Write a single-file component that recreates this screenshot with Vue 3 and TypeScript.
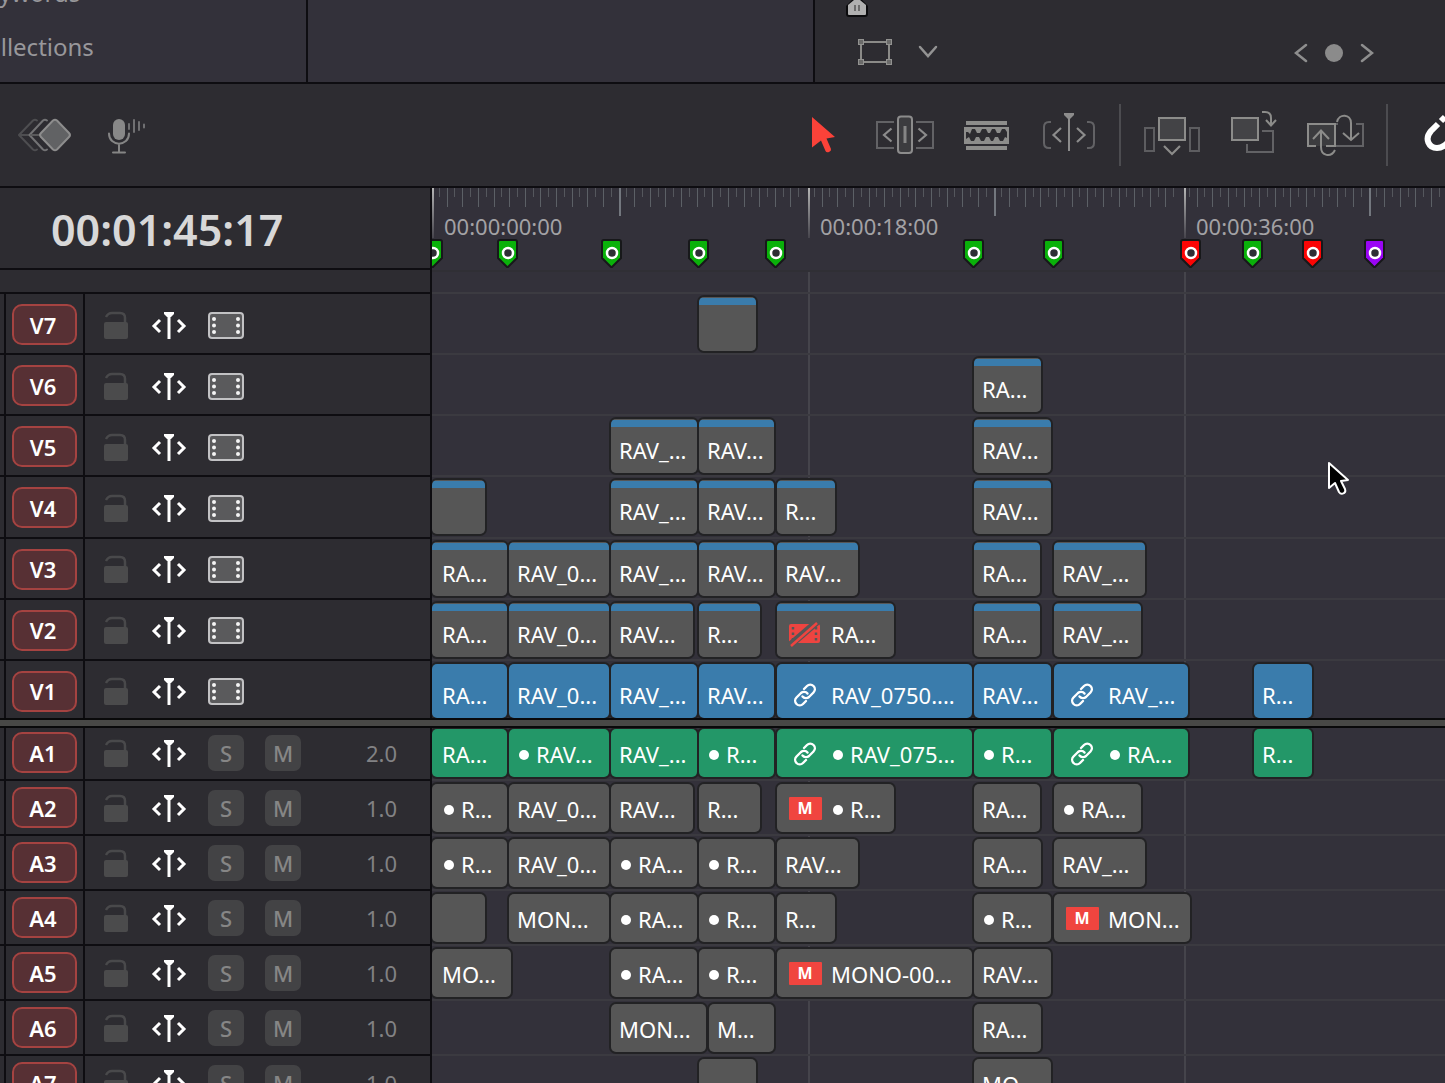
<script setup lang="ts">
type Flag = 'link' | 'muted' | 'disabled'

interface Clip {
  start: number
  end: number
  label: string
  flag?: Flag
  dot?: boolean
}

interface Track {
  name: string
  channels?: string
  main?: boolean
  clips: Clip[]
}

/* "*" before a label marks a clip that carries its own channel dot */
function clip(start: number, end: number, text = '', flag?: Flag): Clip {
  const dot = text.startsWith('*')
  return { start, end, label: dot ? text.slice(1) : text, dot, flag }
}

function gapBefore(track: Track, index: number): number {
  const previous = index === 0 ? 0 : track.clips[index - 1].end
  return track.clips[index].start - previous
}

const videoTracks: Track[] = [
  { name: 'V7', clips: [clip(267, 324)] },
  { name: 'V6', clips: [clip(542, 609, 'RA...')] },
  { name: 'V5', clips: [clip(179, 265, 'RAV_...'), clip(267, 342, 'RAV...'), clip(542, 619, 'RAV...')] },
  {
    name: 'V4',
    clips: [
      clip(0, 53),
      clip(179, 265, 'RAV_...'),
      clip(267, 342, 'RAV...'),
      clip(345, 403, 'R...'),
      clip(542, 619, 'RAV...'),
    ],
  },
  {
    name: 'V3',
    clips: [
      clip(0, 75, 'RA...'),
      clip(77, 177, 'RAV_0...'),
      clip(179, 265, 'RAV_...'),
      clip(267, 342, 'RAV...'),
      clip(345, 426, 'RAV...'),
      clip(542, 608, 'RA...'),
      clip(622, 713, 'RAV_...'),
    ],
  },
  {
    name: 'V2',
    clips: [
      clip(0, 75, 'RA...'),
      clip(77, 177, 'RAV_0...'),
      clip(179, 261, 'RAV...'),
      clip(267, 328, 'R...'),
      clip(345, 462, 'RA...', 'disabled'),
      clip(542, 608, 'RA...'),
      clip(622, 709, 'RAV_...'),
    ],
  },
  {
    name: 'V1',
    main: true,
    clips: [
      clip(0, 75, 'RA...'),
      clip(77, 177, 'RAV_0...'),
      clip(179, 265, 'RAV_...'),
      clip(267, 342, 'RAV...'),
      clip(345, 540, 'RAV_0750....', 'link'),
      clip(542, 619, 'RAV...'),
      clip(622, 756, 'RAV_...', 'link'),
      clip(822, 880, 'R...'),
    ],
  },
]

const audioTracks: Track[] = [
  {
    name: 'A1',
    channels: '2.0',
    main: true,
    clips: [
      clip(0, 75, 'RA...'),
      clip(77, 177, '*RAV...'),
      clip(179, 265, 'RAV_...'),
      clip(267, 342, '*R...'),
      clip(345, 540, '*RAV_075...', 'link'),
      clip(542, 619, '*R...'),
      clip(622, 756, '*RA...', 'link'),
      clip(822, 880, 'R...'),
    ],
  },
  {
    name: 'A2',
    channels: '1.0',
    clips: [
      clip(0, 75, '*R...'),
      clip(77, 177, 'RAV_0...'),
      clip(179, 261, 'RAV...'),
      clip(267, 328, 'R...'),
      clip(345, 462, '*R...', 'muted'),
      clip(542, 608, 'RA...'),
      clip(622, 709, '*RA...'),
    ],
  },
  {
    name: 'A3',
    channels: '1.0',
    clips: [
      clip(0, 75, '*R...'),
      clip(77, 177, 'RAV_0...'),
      clip(179, 265, '*RA...'),
      clip(267, 342, '*R...'),
      clip(345, 426, 'RAV...'),
      clip(542, 609, 'RA...'),
      clip(622, 713, 'RAV_...'),
    ],
  },
  {
    name: 'A4',
    channels: '1.0',
    clips: [
      clip(0, 53),
      clip(77, 177, 'MON...'),
      clip(179, 265, '*RA...'),
      clip(267, 342, '*R...'),
      clip(345, 403, 'R...'),
      clip(542, 619, '*R...'),
      clip(622, 758, 'MON...', 'muted'),
    ],
  },
  {
    name: 'A5',
    channels: '1.0',
    clips: [
      clip(0, 79, 'MO...'),
      clip(179, 265, '*RA...'),
      clip(267, 342, '*R...'),
      clip(345, 540, 'MONO-00...', 'muted'),
      clip(542, 619, 'RAV...'),
    ],
  },
  {
    name: 'A6',
    channels: '1.0',
    clips: [clip(179, 274, 'MON...'), clip(277, 342, 'M...'), clip(542, 609, 'RA...')],
  },
  { name: 'A7', channels: '1.0', clips: [clip(267, 324), clip(542, 619, 'MO...')] },
]

const groups = [
  { kind: 'video', tracks: videoTracks },
  { kind: 'audio', tracks: audioTracks },
]

const labels = ['00:00:00:00', '00:00:18:00', '00:00:36:00']

const ticks = Array.from({ length: 300 }, (_, i) => {
  if (i % 48 === 0) return { x: (i / 48) * 376, kind: 'major' }
  const kind = i % 24 === 0 ? 'half' : i % 2 === 0 ? 'medium' : 'small'
  return { x: Math.round((i * 375) / 48) - 1, kind }
})
const tickHeight: Record<string, number> = { major: 50, half: 28, medium: 19, small: 9 }

const green = '#0ab10a'
const red = '#fb0505'
const markers = [
  { x: 0, color: green },
  { x: 75, color: green },
  { x: 179, color: green },
  { x: 266, color: green },
  { x: 343, color: green },
  { x: 541, color: green },
  { x: 621, color: green },
  { x: 758, color: red },
  { x: 820, color: green },
  { x: 880, color: red },
  { x: 942, color: '#9a05f5' },
]
</script>

<template>
  <div class="editor">
    <header class="panels">
      <ul class="bins">
        <li>Keywords</li>
        <li>Collections</li>
      </ul>
      <div class="media"></div>
      <div class="viewer">
        <div class="viewer-scrub">
          <svg width="22" height="18" viewBox="0 0 22 18">
            <path d="M0 6L7 -1H15L22 6V14a3 3 0 0 1-3 3H3a3 3 0 0 1-3-3Z" fill="#0b0b0d" />
            <path d="M2 5L8 0H14L20 5V14a1 1 0 0 1-1 1H3a1 1 0 0 1-1-1Z" fill="#b0b0b0" />
            <path d="M9 5V11M13 5V11" stroke="#6c6c6c" stroke-width="2" />
          </svg>
        </div>
        <div class="viewer-controls">
          <button type="button" aria-label="Transform">
            <svg width="36" height="28" viewBox="0 0 36 28" fill="none">
              <rect x="4" y="4" width="28" height="20" stroke="#8b8b88" stroke-width="2" />
              <g fill="#6b6b6a" stroke="#929290" stroke-width="1">
                <rect x="1.500" y="1.500" width="5" height="5" />
                <rect x="29.500" y="1.500" width="5" height="5" />
                <rect x="1.500" y="21.500" width="5" height="5" />
                <rect x="29.500" y="21.500" width="5" height="5" />
              </g>
            </svg>
          </button>
          <button type="button" class="drop" aria-label="Transform options">
            <svg width="20" height="14" viewBox="0 0 20 14" fill="none">
              <path d="M2 2L10 11L18 2" stroke="#939393" stroke-width="2.500" stroke-linecap="round" />
            </svg>
          </button>
          <div class="keyframes">
            <button type="button" aria-label="Previous keyframe">
              <svg width="14" height="20" viewBox="0 0 14 20" fill="none">
                <path d="M12 2L2 10L12 18" stroke="#8e8e8e" stroke-width="2.500" stroke-linecap="round" />
              </svg>
            </button>
            <button type="button" aria-label="Add keyframe">
              <svg width="18" height="18" viewBox="0 0 18 18"><circle cx="9" cy="9" r="9" fill="#8b8b8b" /></svg>
            </button>
            <button type="button" aria-label="Next keyframe">
              <svg width="14" height="20" viewBox="0 0 14 20" fill="none">
                <path d="M2 2L12 10L2 18" stroke="#8e8e8e" stroke-width="2.500" stroke-linecap="round" />
              </svg>
            </button>
          </div>
        </div>
      </div>
    </header>

    <nav class="toolbar">
      <div class="tools">
        <button type="button" class="tool" aria-label="Keyframes">
          <svg viewBox="-32 -32 64 64" fill="none" stroke-width="2" stroke-linejoin="round" stroke-linecap="round">
            <path d="M-8 -14.500Q-10 -16 -12 -14.500L-26 0L-12 14.500Q-10 16 -8 14.500" stroke="#4e4e51" />
            <path d="M-25 0H-16" stroke="#4e4e51" />
            <path d="M2 -14.500Q0 -16 -2 -14.500L-15.500 0L-2 14.500Q0 16 2 14.500" stroke="#737375" />
            <path d="M-14 0H-6" stroke="#59595b" />
            <path
              d="M8 -14.500Q10 -16 12 -14.500L24 -2Q26 0 24 2L12 14.500Q10 16 8 14.500L-4 2Q-6 0 -4 -2Z"
              fill="#616264"
              stroke="#8d8d8d"
            />
          </svg>
        </button>
        <button type="button" class="tool" aria-label="Voiceover">
          <svg viewBox="-32 -32 64 64" fill="none" stroke="#858585" stroke-width="2" stroke-linecap="round">
            <rect x="-14" y="-16" width="12" height="21" rx="6" fill="#888888" stroke="none" />
            <path d="M-18 -1.500C-18 12 2 12 2 -1.500M-8 9V17M-14 17.500H-2" />
            <path d="M2 -11V-6M7 -15V-3M12 -13V-5M17 -10.500V-7.500" stroke="#707072" />
          </svg>
        </button>
      </div>

      <div class="tools">
        <button type="button" class="tool" aria-label="Selection">
          <svg viewBox="-32 -32 64 64">
            <path
              d="M-11 -18L12 2L3.500 3.500L8 14Q8.500 16 6 17Q3.500 18 2.500 16L-2 5.500L-11 12.500Z"
              fill="#fb4239"
            />
          </svg>
        </button>
        <button type="button" class="tool" aria-label="Trim edit">
          <svg viewBox="-32 -32 64 64" fill="none" stroke="#8c8c8c" stroke-width="2">
            <path d="M-11 -13H-28V13H-11M11 -13H28V13H11" stroke="#626265" />
            <path d="M-13.500 -6.500L-21 0L-13.500 6.500M13.500 -6.500L21 0L13.500 6.500" stroke-width="2.200" />
            <rect x="-7" y="-18.500" width="14" height="36.500" rx="3" fill="#3c3c3f" />
            <path d="M0 -9V8" stroke-width="3" stroke="#858585" />
          </svg>
        </button>
        <button type="button" class="tool" aria-label="Blade edit">
          <svg viewBox="-32 -32 64 64" fill="#8d8d8b">
            <rect x="-21" y="-14" width="41" height="4" />
            <rect x="-23" y="-8" width="45" height="17" />
            <path
              d="M-21 -3H-19L-17 -1L-15 -6H-12L-10 -2H-7L-5 -6H-1L1 -2H3L5 -6H8L10 -2H13L15 -6H18L20 -3V3L18 2L16 6H13L11 2H8L6 6H4L2 2H-1L-3 6H-6L-8 2H-11L-13 6H-16L-18 2L-21 4Z"
              fill="#2d2c30"
            />
            <rect x="-21" y="11" width="41" height="4" />
          </svg>
        </button>
        <button type="button" class="tool" aria-label="Dynamic trim">
          <svg viewBox="-32 -32 64 64" fill="none" stroke="#8c8c8c" stroke-width="2">
            <path d="M-18 -13H-20Q-25 -13 -25 -8V8Q-25 13 -20 13H-18M18 -13H20Q25 -13 25 -8V8Q25 13 20 13H18" stroke="#626265" />
            <path d="M-8 -7L-15.500 0L-8 7M8 -7L15.500 0L8 7" stroke-width="2.200" />
            <path d="M0 -18V16" />
            <path d="M-5 -22H5V-20L1 -16H-1L-5 -20Z" fill="#8c8c8c" stroke="none" />
          </svg>
        </button>
        <span class="separator"></span>
        <button type="button" class="tool" aria-label="Insert">
          <svg viewBox="-32 -32 64 64" fill="none" stroke="#8c8c8a" stroke-width="2">
            <rect x="-27" y="-7" width="9" height="23" stroke="#5d5d60" />
            <rect x="18" y="-7" width="9" height="23" stroke="#5d5d60" />
            <rect x="-13" y="-17" width="26" height="22" fill="#434346" />
            <path d="M-8 11L0 19L8 11" stroke-width="2.200" />
          </svg>
        </button>
        <button type="button" class="tool" aria-label="Overwrite">
          <svg viewBox="-32 -32 64 64" fill="none" stroke="#8c8c8a" stroke-width="2">
            <path d="M8 -4H19V17H-7V9" stroke="#626265" />
            <rect x="-22" y="-17" width="26" height="22" fill="#434346" />
            <path d="M8 -23H11Q17 -23 17 -17V-10M12 -15L17 -9.500L22 -15" />
          </svg>
        </button>
        <button type="button" class="tool" aria-label="Replace">
          <svg viewBox="-32 -32 64 64" fill="none" stroke="#8c8c8a" stroke-width="2">
            <path d="M-27 -11H-2V11H-27Z" fill="#3c3c3f" stroke="none" />
            <path d="M2 -11H-1V11H27V-11H20" stroke="#626265" />
            <path d="M-20 11H-28V-11H-1V11H-10" />
            <path d="M-1 15C-5 23 -15 21 -15 12V-4M-23 4L-15 -4.500L-7 4" />
            <path d="M1 -13C3 -22 15 -21 15 -12V4M7 -2L15 5L23 -2" />
          </svg>
        </button>
        <span class="separator"></span>
        <button type="button" class="tool" aria-label="Snapping">
          <svg viewBox="-32 -32 64 64" fill="none" stroke="#ffffff" stroke-width="6">
            <path d="M-1 -11L-8 -4C-15 4 -10 13 -2 13C5 13 9 7 15 1" />
            <path d="M2 -14L6 -18M18 -2L22 -6" />
          </svg>
        </button>
      </div>
    </nav>

    <main class="timeline">
      <section class="headers">
        <div class="timecode">00:01:45:17</div>
        <div class="strip"></div>
        <template v-for="group in groups" :key="group.kind">
          <div v-if="group.kind === 'audio'" class="divider"></div>
          <div class="group" :class="group.kind">
            <div v-for="track in group.tracks" :key="track.name" class="head">
              <span class="edge"></span>
              <div class="dest">
                <button type="button" class="badge">{{ track.name }}</button>
              </div>
              <div class="controls">
                <button type="button" :aria-label="'Lock ' + track.name">
                  <svg width="28" height="30" viewBox="0 0 28 30">
                    <path d="M4 7Q6 3 10 3H18Q23 3 23 8V13" fill="none" stroke="#49494b" stroke-width="2.500" />
                    <rect x="2" y="12" width="24" height="17" rx="2" fill="#4b4b4c" />
                  </svg>
                </button>
                <button type="button" :aria-label="'Auto select ' + track.name">
                  <svg width="36" height="30" viewBox="0 0 36 30" fill="none" stroke="#ffffff" stroke-width="3">
                    <path d="M9 10L3 16L9 22M27 10L33 16L27 22" />
                    <path d="M18 4V29" />
                    <path d="M13 2H23V4L20 7H16L13 4Z" fill="#ffffff" stroke="none" />
                  </svg>
                </button>
                <button v-if="group.kind === 'video'" type="button" :aria-label="'Enable ' + track.name">
                  <svg width="36" height="30" viewBox="0 0 36 30">
                    <rect x="1" y="3" width="34" height="25" rx="3" fill="#5a5a5c" stroke="#c2c2c4" stroke-width="2" />
                    <g fill="#f4f4f4">
                      <circle v-for="y in [9, 15.5, 22]" :key="'l' + y" cx="6" :cy="y" r="2" />
                      <circle v-for="y in [9, 15.5, 22]" :key="'r' + y" cx="30" :cy="y" r="2" />
                    </g>
                  </svg>
                </button>
                <template v-else>
                  <button type="button" class="toggle">S</button>
                  <button type="button" class="toggle">M</button>
                  <span class="channels">{{ track.channels }}</span>
                </template>
              </div>
            </div>
          </div>
        </template>
      </section>

      <section class="body">
        <div class="ruler">
          <svg class="scale" width="100%" height="82">
            <defs>
              <linearGradient id="fade" x1="0" y1="0" x2="0" y2="1">
                <stop offset="0" stop-color="#b4b4b4" />
                <stop offset="1" stop-color="#b4b4b4" stop-opacity="0.150" />
              </linearGradient>
            </defs>
            <rect
              v-for="tick in ticks"
              :key="tick.x"
              class="tick"
              :class="tick.kind"
              :x="tick.x"
              y="0"
              :width="tick.kind === 'small' || tick.kind === 'medium' ? 1 : 2"
              :height="tickHeight[tick.kind]"
            />
            <g v-for="marker in markers" :key="marker.x" :transform="`translate(${marker.x} 52)`">
              <path
                d="M-7 0H8Q10 0 10 2V18L1 27H0L-9 18V2Q-9 0 -7 0Z"
                :fill="marker.color"
                stroke="#17181a"
                stroke-width="2"
              />
              <circle cx="1" cy="13" r="5" fill="#2e2e34" stroke="#ffffff" stroke-width="2.500" />
            </g>
          </svg>
          <span v-for="label in labels" :key="label" class="stamp">{{ label }}</span>
        </div>

        <div class="lanes">
          <div class="strip"></div>
          <template v-for="group in groups" :key="group.kind">
            <div v-if="group.kind === 'audio'" class="divider"></div>
            <div class="group" :class="group.kind">
              <div v-for="track in group.tracks" :key="track.name" class="lane">
                <div
                  v-for="(item, index) in track.clips"
                  :key="item.start"
                  class="clip"
                  :class="{ main: track.main, first: item.start === 0 }"
                  :style="{ marginLeft: gapBefore(track, index) + 'px', width: item.end - item.start + 'px' }"
                >
                  <span v-if="item.flag" class="flag">
                    <svg v-if="item.flag === 'link'" width="24" height="24" viewBox="0 0 24 24" fill="none" stroke="#ffffff" stroke-width="2.400" stroke-linecap="round">
                      <path d="M9.500 13.500a4.500 4.500 0 0 0 6.500 0.500l4.500-4.500a4.500 4.500 0 0 0-6.500-6.500l-3 3" />
                      <path d="M14.500 10.500a4.500 4.500 0 0 0-6.500-0.500l-4.500 4.500a4.500 4.500 0 0 0 6.500 6.500l3-3" />
                    </svg>
                    <svg v-else-if="item.flag === 'disabled'" width="34" height="26" viewBox="0 0 34 26">
                      <rect x="1" y="3" width="31" height="19" rx="2" fill="#ee4440" />
                      <path d="M5 6V20M28 6V20" stroke="#565656" stroke-width="2.500" stroke-dasharray="2.500 3" />
                      <path d="M1 25L30 0" stroke="#565656" stroke-width="7" />
                      <path d="M3 25L29 2" stroke="#ee4440" stroke-width="2.500" />
                    </svg>
                    <b v-else class="mute">M</b>
                  </span>
                  <i v-if="item.dot" class="dot"></i>
                  <span>{{ item.label }}</span>
                </div>
              </div>
            </div>
          </template>
        </div>
      </section>
    </main>

    <svg class="pointer" width="24" height="38" viewBox="0 0 24 38">
      <path
        d="M3 3V28L9 23L13 32Q15 35 18 33Q20 32 19 29L15 21L22 20Z"
        fill="#000000"
        stroke="#ffffff"
        stroke-width="2"
        stroke-linejoin="round"
      />
    </svg>
  </div>
</template>

<style>
body {
  margin: 0;
  background: #2d2c31;
}
</style>

<style scoped>
.editor {
  --line: #0e0d11;
  --chrome: #2d2c31;
  --canvas: #33313a;
  position: relative;
  height: 100vh;
  overflow: hidden;
  background: var(--chrome);
  color: #ffffff;
  font-family: 'Noto Sans', 'Open Sans', sans-serif;
  font-size: 22px;
  line-height: 30px;
}

.editor *,
.editor *::before {
  box-sizing: border-box;
}

button {
  display: flex;
  align-items: center;
  justify-content: center;
  padding: 0;
  border: 0;
  background: none;
  color: inherit;
  font: inherit;
}

svg {
  display: block;
  flex: none;
}

.panels {
  display: grid;
  grid-template-columns: 308px 507px 1fr;
  height: 84px;
  border-bottom: 2px solid var(--line);
}

.bins {
  display: flex;
  flex-direction: column;
  justify-content: flex-end;
  margin: 0;
  padding: 0 0 8px;
  overflow: hidden;
  border-right: 2px solid var(--line);
  background: var(--canvas);
  color: #98979b;
  font-size: 24px;
  line-height: 54px;
  list-style: none;
}

.bins li {
  margin-left: -29px;
}

.media {
  border-right: 2px solid var(--line);
  background: var(--canvas);
}

.viewer-scrub {
  height: 36px;
  padding-left: 31px;
}

.viewer-controls {
  display: flex;
  align-items: center;
  height: 32px;
  padding: 0 71px 0 42px;
}

.drop {
  margin-left: 25px;
}

.keyframes {
  display: flex;
  align-items: center;
  gap: 17px;
  margin-left: auto;
  padding-top: 2px;
}

.toolbar {
  display: grid;
  grid-template-columns: 778px 1fr;
  height: 104px;
  padding-left: 4px;
  border-bottom: 2px solid var(--line);
}

.tools {
  display: flex;
  align-items: center;
  min-width: 0;
}

.tool {
  flex: none;
  width: 82px;
}

.tool svg {
  width: 64px;
  height: 64px;
}

.separator {
  flex: none;
  width: 2px;
  height: 62px;
  margin: 0 10px 0 9px;
  background: #4c4c50;
}

.timeline {
  display: grid;
  grid-template-columns: 432px 1fr;
}

.headers {
  border-right: 2px solid var(--line);
}

.timecode {
  height: 82px;
  padding: 0 0 0 51px;
  border-bottom: 2px solid var(--line);
  color: #d8d8d8;
  font-size: 43px;
  font-weight: 600;
  line-height: 84px;
}

.strip {
  height: 24px;
  border-bottom: 2px solid var(--line);
}

.group {
  display: flex;
  flex-direction: column;
}

.group.video {
  height: 428px;
}

.group.video > div {
  flex: 1;
}

.group.audio > div {
  height: 55px;
}

.divider {
  position: relative;
  z-index: 1;
  height: 10px;
  margin: -4px 0 -2px;
  border: solid #09090a;
  border-width: 2px 0;
  background: #484846;
}

.headers .divider {
  margin-right: -2px;
}

.head {
  display: grid;
  grid-template-columns: 6px 79px 1fr;
  border-bottom: 2px solid var(--line);
}

.edge,
.dest {
  border-right: 2px solid var(--line);
}

.dest,
.controls {
  display: flex;
  align-items: center;
}

.video .dest,
.video .controls {
  padding-top: 2px;
}

.dest {
  justify-content: center;
}

.badge {
  width: 65px;
  height: 41px;
  padding-right: 3px;
  border: 2px solid #a54341;
  border-radius: 10px;
  background: #573034;
  font-weight: 600;
  line-height: 36px;
}

.controls {
  gap: 21px;
  padding-right: 33px;
  padding-left: 17px;
}

.toggle {
  width: 36px;
  height: 36px;
  border-radius: 7px;
  background: #434345;
  color: #868686;
  font-weight: 500;
}

.channels {
  margin-left: auto;
  color: #828284;
}

.body {
  min-width: 0;
  overflow: hidden;
  background: var(--canvas);
}

.ruler {
  position: relative;
  display: flex;
  height: 84px;
  border-bottom: 2px solid #302f35;
}

.scale {
  position: absolute;
  inset: 0;
}

.tick {
  fill: #5c6066;
}

.tick.small {
  fill: #55575d;
}

.tick.half {
  fill: #73777e;
}

.tick.major {
  fill: url(#fade);
}

.stamp {
  flex: none;
  width: 376px;
  padding: 23px 0 0 12px;
  color: #a3a2a5;
}

.lanes {
  background: repeating-linear-gradient(90deg, transparent 0 374px, #45444b 374px 376px);
  background-position: 2px 0;
}

.lanes .strip {
  height: 22px;
  border-color: #3c3b41;
}

.lane {
  display: flex;
  border-bottom: 2px solid #3b3a40;
}

.clip {
  display: flex;
  flex: none;
  align-items: center;
  margin-top: 3px;
  padding-left: 8px;
  overflow: hidden;
  border-radius: 5px;
  background: #565656;
  box-shadow: 0 0 0 2px #222224;
  white-space: nowrap;
}

.clip.first {
  padding-left: 10px;
}

.video .clip {
  height: 54px;
  padding-top: 8px;
  background: linear-gradient(#565656 1px, #3a7cac 1px, #3a7cac 8px, #565656 8px);
}

.video .clip.main {
  background: #3a7cac;
}

.audio .clip {
  height: 48px;
  padding-top: 1px;
}

.audio .clip.main {
  background: #239768;
}

.flag {
  display: flex;
  flex: none;
  justify-content: center;
  width: 40px;
  margin-right: 6px;
}

.mute {
  width: 33px;
  height: 23px;
  border-radius: 1px;
  background: #f0453f;
  font-size: 16px;
  line-height: 23px;
  text-align: center;
}

.dot {
  flex: none;
  width: 10px;
  height: 10px;
  margin: 3px 7px 0 2px;
  border-radius: 50%;
  background: #ffffff;
}

.pointer {
  position: absolute;
  top: 460px;
  left: 1326px;
  z-index: 2;
}
</style>
